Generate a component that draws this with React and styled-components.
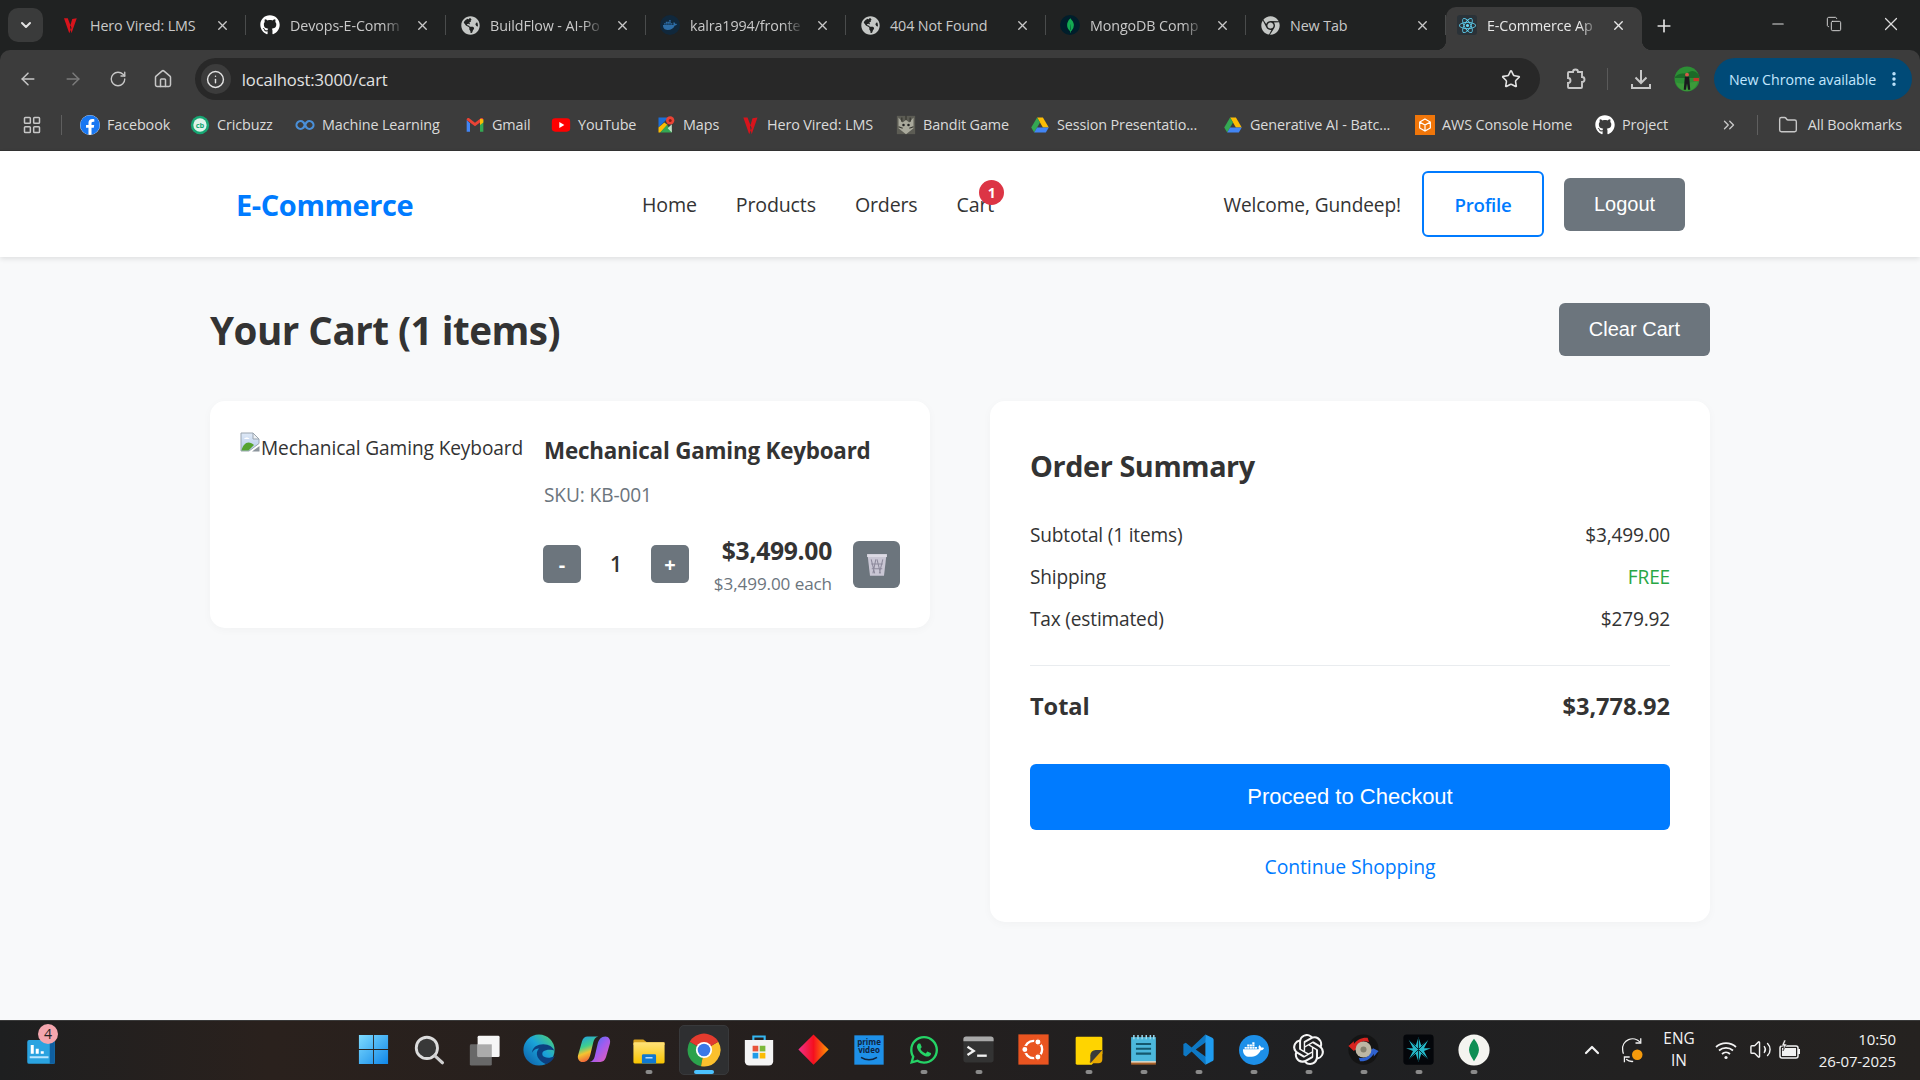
import React from 'react';
import styled, { createGlobalStyle } from 'styled-components';
import { ArrowLeft, ArrowRight, RotateCw, House, Info, Star, MoreVertical, Minus, Copy, X, Plus, ChevronDown, ChevronUp, LayoutGrid, Folder, ChevronsRight, Volume2 } from 'lucide-react';
import { FaGithub, FaGlobeAmericas, FaChrome, FaWhatsapp, FaDocker, FaFacebook } from 'react-icons/fa';
import { SiMongodb, SiReact, SiOpenai } from 'react-icons/si';

const UI = '"Open Sans", "Noto Sans", sans-serif';
const BTN = '"Liberation Sans", Arial, sans-serif';

const Global = createGlobalStyle`
  html, body { margin: 0; padding: 0; background: #f8f9fa; }
  body { font-family: ${UI}; color: #333; }
  * { box-sizing: border-box; }
`;

const Screen = styled.div`
  width: 1920px; height: 1080px; display: flex; flex-direction: column; overflow: hidden;
`;

/* ---------- browser chrome ---------- */
const TabStrip = styled.div`
  height: 50px; background: #202222; display: flex; align-items: flex-end; position: relative;
`;
const TabList = styled.div`display: flex; align-items: stretch; height: 43px;`;
const TabMenu = styled.button`
  width: 35px; height: 34px; margin: 0 3px 8px 8px; align-self: flex-end; border: 0; border-radius: 10px;
  background: #3a3b3b; color: #e3e3e3; display: flex; align-items: center; justify-content: center; padding: 0;
`;
const Tab = styled.div`
  position: relative; width: ${p => p.$w || 200}px; display: flex; align-items: center; padding: 0 14px 7px ${p => p.$active ? 11 : 14}px;
  color: ${p => p.$active ? '#e8e8e8' : '#c9c9c9'}; font-size: 14.3px; letter-spacing: -0.1px;
  background: ${p => p.$active ? '#3c3c3c' : 'transparent'};
  border-radius: ${p => p.$active ? '10px 10px 0 0' : '0'};
  &::after {
    content: ''; display: ${p => p.$last ? 'none' : 'block'}; position: absolute; right: 0; top: 8px; height: 20px; width: 1px; background: #4a4c4c;
  }
  ${p => p.$active ? `
    &::before { content: ''; position: absolute; left: -10px; bottom: 0; width: 10px; height: 10px;
      background: radial-gradient(circle at 0 0, transparent 10px, #3c3c3c 10.5px); }
  ` : ''}
`;
const ActiveFlare = styled.span`
  position: absolute; right: -10px; bottom: 0; width: 10px; height: 10px;
  background: radial-gradient(circle at 100% 0, transparent 10px, #3c3c3c 10.5px);
`;
const Favicon = styled.span`
  width: 20px; height: 20px; flex: none; display: flex; align-items: center; justify-content: center;
  color: ${p => p.$color || '#c4c7c5'}; background: ${p => p.$bg || 'transparent'}; border-radius: ${p => p.$round || '0'};
`;
const TabTitle = styled.span`
  flex: 1; margin-left: 10px; margin-right: ${p => p.$fade ? 6 : 0}px; white-space: nowrap;
  ${p => p.$fade ? `mask-image: linear-gradient(90deg, #000 82%, transparent 100%);` : ''}
`;
const TabClose = styled.span`
  width: 20px; flex: none; margin-left: 2px; display: flex; justify-content: center; color: inherit;
`;
const NewTab = styled.span`
  width: 26px; height: 26px; margin: 0 0 11px 9px; align-self: flex-end; color: #e3e3e3; display: flex; align-items: center; justify-content: center;
`;
const WindowControls = styled.div`
  margin-left: auto; display: flex; align-items: center; height: 50px; color: #dcdcdc;
`;
const WinBtn = styled.span`width: ${p => p.$w}px; display: flex; justify-content: center; padding-bottom: 2px;`;

const ToolBack = styled.div`background: #202222;`;
const Toolbar = styled.div`
  height: 50px; background: #3c3c3c; display: flex; padding: 8px 8px 0 5px; color: #c7c7c7;
  border-radius: 10px 10px 0 0;
`;
const NavIcon = styled.span`
  width: 45px; height: 42px; display: flex; align-items: center; justify-content: center; padding-left: 1px;
  color: ${p => p.$dim ? '#7b7b7b' : '#c7c7c7'};
`;
const Omnibox = styled.div`
  width: 1347px; height: 42px; margin-left: 10px; background: #282828; border-radius: 21px; display: flex; align-items: center; padding: 0 19px 0 6px; color: #e3e3e3;
`;
const InfoChip = styled.span`
  width: 30px; height: 30px; border-radius: 50%; background: #3c3c3c; display: flex; align-items: center; justify-content: center; color: #e3e3e3;
`;
const Url = styled.span`margin-left: 11px; font-size: 16.6px; letter-spacing: -0.1px; flex: 1;`;
const Tools = styled.div`display: flex; align-items: center; height: 42px;`;
const ToolSlot = styled.span`display: flex; align-items: center; justify-content: center; width: ${p => p.$w}px; flex: none; padding-left: ${p => p.$pl || 0}px;`;
const ToolDivider = styled.span`width: 1px; height: 22px; background: #5a5a5a; flex: none;`;
const UpdatePill = styled.span`
  width: 198px; height: 42px; margin-left: 14px; border-radius: 21px; background: #004a77; color: #c2e7ff; display: flex; align-items: center;
  padding-left: 15px; font-size: 14.2px; white-space: nowrap; justify-content: space-between; padding-right: 9px; letter-spacing: -0.05px;
`;

const BookmarkBar = styled.div`
  height: 50px; background: #3c3c3c; display: flex; align-items: center; color: #dadada; font-size: 14.4px; letter-spacing: -0.12px; padding-bottom: 1px;
`;
const AppsIcon = styled.span`
  width: 61px; padding-left: 22px; display: flex; color: #c7c7c7; flex: none;
`;
const BarDivider = styled.span`width: 1px; height: 20px; background: #5f5f5f; flex: none;`;
const Bookmark = styled.span`
  flex: 0 0 ${p => p.$w}px; display: flex; align-items: center; gap: 7px; white-space: nowrap;
`;
const BookmarkGroup = styled.div`display: flex; align-items: center; margin-left: 18px;`;
const BookmarkEnd = styled.div`margin-left: auto; display: flex; align-items: center; padding-right: 18px; color: #c7c7c7;`;
const Spacer = styled.span`width: ${p => p.$w}px; flex: none;`;
const AllLabel = styled.span`color: #dadada;`;

/* ---------- shop ---------- */
const Shop = styled.main`flex: 1; background: #f8f9fa; min-height: 0; border-top: 1px solid #333;`;
const Nav = styled.nav`
  height: 106px; background: #fff; box-shadow: 0 2px 5px rgba(0,0,0,.1); display: flex; align-items: center; padding: 0 235px 0 236px;
`;
const Logo = styled.div`color: #007bff; font-size: 29px; font-weight: 700; letter-spacing: -0.4px; width: 406px; white-space: nowrap;`;
const NavLinks = styled.div`display: flex; gap: 39px;`;
const NavLink = styled.a`
  position: relative; font-size: 19.6px; font-weight: 500; color: #333; letter-spacing: -0.15px; white-space: nowrap;
`;
const Badge = styled.span`
  position: absolute; right: -10px; top: -11px; width: 25px; height: 25px; border-radius: 50%; background: #dc3545; color: #fff;
  font-size: 14px; font-weight: 700; display: flex; align-items: center; justify-content: center; letter-spacing: 0;
`;
const NavUser = styled.div`margin-left: auto; display: flex; align-items: center;`;
const Welcome = styled.span`font-size: 19.1px; color: #333; margin-right: 21px; padding-top: 1px; white-space: nowrap; letter-spacing: -0.1px;`;
const ProfileBtn = styled.a`
  width: 122px; height: 66px; border: 2px solid #007bff; border-radius: 6px; color: #007bff; font-size: 18.7px; font-weight: 600;
  display: flex; align-items: center; justify-content: center; letter-spacing: -0.3px;
`;
const GreyBtn = styled.button`
  background: #6c757d; color: #fff; border: 0; border-radius: 6px; font: 20px ${BTN}; height: 53px; padding: 0 30px;
`;
const LogoutBtn = styled(GreyBtn)`margin-left: 20px; padding: 0 30px; width: 121px;`;
const Content = styled.div`padding: 46px 210px 0;`;
const Head = styled.div`display: flex; justify-content: space-between; align-items: center; height: 53px;`;
const Title = styled.h1`margin: 0; font-size: 38.6px; font-weight: 700; letter-spacing: -0.5px; color: #333; white-space: nowrap;`;
const Columns = styled.div`display: grid; grid-template-columns: 720px 720px; gap: 60px; margin-top: 45px; align-items: start;`;
const Card = styled.section`
  background: #fff; border-radius: 15px; box-shadow: 0 2px 10px rgba(0,0,0,.03);
`;
const ItemCard = styled(Card)`display: flex; padding: 30px; height: 227px;`;
const ItemPic = styled.div`
  width: 304px; flex: none; display: flex; align-items: flex-start; font-size: 19.1px; letter-spacing: -0.1px; color: #333; white-space: nowrap;
`;
const BrokenIcon = styled.svg`width: 20px; height: 20px; flex: none; margin-top: 1px;`;
const AltText = styled.span`margin: 5px 0 0 1px; line-height: 24px;`;
const ItemBody = styled.div`flex: 1; min-width: 0;`;
const ItemName = styled.h3`margin: 8px 0 0; font-size: 22.4px; font-weight: 700; line-height: 24px; letter-spacing: -0.2px; color: #333; white-space: nowrap;`;
const Sku = styled.div`margin-top: 20px; font-size: 19.1px; line-height: 24px; color: #6c757d; letter-spacing: -0.1px;`;
const ItemRow = styled.div`display: flex; align-items: center; margin-top: 32px; height: 50px; margin-left: -1px;`;
const QtyBtn = styled.button`
  width: 38px; height: 38px; background: #6c757d; color: #fff; border: 0; border-radius: 5px; font: 700 20px ${UI}; padding: 0; display: flex; align-items: center; justify-content: center;
`;
const Qty = styled.span`width: 70px; text-align: center; font-size: 21px; font-weight: 600; color: #333;`;
const PriceCol = styled.div`margin-left: auto; text-align: right; margin-right: 21px; padding-top: 6px;`;
const Price = styled.div`font-size: 24.7px; font-weight: 700; line-height: 32px; letter-spacing: -0.3px; color: #333;`;
const Each = styled.div`font-size: 17.1px; line-height: 33px; color: #6c757d; letter-spacing: -0.1px; white-space: nowrap;`;
const TrashBtn = styled.button`
  width: 47px; height: 47px; background: #6c757d; border: 0; border-radius: 6px; padding: 0; display: flex; align-items: center; justify-content: center;
`;
const SummaryCard = styled(Card)`padding: 40px; height: 521px;`;
const SummaryTitle = styled.h2`margin: 0 0 23px; font-size: 28.8px; font-weight: 700; line-height: 50px; letter-spacing: -0.4px; color: #333;`;
const Row = styled.div`
  display: flex; justify-content: space-between; align-items: center; height: 42px; font-size: 19.1px; color: #333; letter-spacing: -0.18px;
`;
const Free = styled.span`color: #28a745;`;
const Divider = styled.hr`border: 0; border-top: 1px solid #e9ecef; margin: 25px 0 0;`;
const TotalRow = styled(Row)`font-size: 23.6px; font-weight: 700; margin-top: 19px; height: 42px; letter-spacing: -0.05px;`;
const Checkout = styled.button`
  display: block; width: 100%; height: 66px; margin-top: 37px; border: 0; border-radius: 6px; background: #007bff; color: #fff; font: 22px ${BTN};
`;
const Continue = styled.a`
  display: block; text-align: center; color: #007bff; font-size: 19.4px; margin-top: 20px; line-height: 34px; letter-spacing: -0.1px;
`;

/* ---------- taskbar ---------- */
const Taskbar = styled.footer`
  height: 60px; flex: none; border-top: 1px solid #3a3a3a; display: flex; align-items: center; color: #fff; padding-bottom: 2px;
  background: linear-gradient(90deg, #1e1f20 0%, #2a211d 14%, #241f1e 45%, #1f2022 70%, #252220 100%);
`;
const WidgetArea = styled.div`width: 346px; flex: none; padding-left: 26px; display: flex;`;
const WidgetIcon = styled.span`position: relative; width: 30px; height: 30px; display: block;`;
const WidgetBadge = styled.span`
  position: absolute; left: 12px; top: -11px; width: 20px; height: 20px; border-radius: 50%; background: #f4a6ae; color: #222;
  font-size: 14px; display: flex; align-items: center; justify-content: center;
`;
const Dock = styled.div`display: flex; width: 1155px; flex: none;`;
const DockSlot = styled.span`
  position: relative; width: 55px; height: 50px; flex: none; display: flex; align-items: center; justify-content: center;
  &::before {
    content: ''; display: ${p => p.$on ? 'block' : 'none'}; position: absolute; inset: 0 2.5px; border-radius: 5px; background: #2e2f31; border: 1px solid #38393b;
  }
  > svg { position: relative; }
  &::after {
    content: ''; display: ${p => p.$on || p.$dot ? 'block' : 'none'}; position: absolute; bottom: 1px; left: 50%;
    transform: translateX(-50%); width: ${p => p.$on ? 20 : 7}px; height: 4px; border-radius: 3px; background: ${p => p.$on ? '#4cc2ff' : '#8a8a8a'};
  }
`;
const Tray = styled.div`flex: 1; display: flex; align-items: center; justify-content: flex-end; padding-right: 24px;`;
const TrayIcon = styled.span`display: flex; align-items: center; justify-content: center; width: ${p => p.$w}px; flex: none; color: #f2f2f2;`;
const Lang = styled.div`width: 54px; text-align: center; font-size: 15.4px; line-height: 22px; color: #f2f2f2; flex: none;`;
const Clock = styled.div`width: 92px; text-align: right; font-size: 15px; line-height: 22px; color: #f2f2f2; flex: none; letter-spacing: -0.1px; white-space: nowrap;`;
const DockerDisc = styled.span`
  width: 30px; height: 30px; border-radius: 50%; background: #1d8fe8; display: flex; align-items: center; justify-content: center; color: #fff;
`;

/* ---------- drawn icons ---------- */
const S = ({ size = 20, vb = '0 0 24 24', children }) => <svg width={size} height={size} viewBox={vb}>{children}</svg>;
const HeroV = ({ size = 18 }) => <S size={size}><path d="M4 3l7 20 3-7L9 3zM12 14l3-10 6-1-7 20z" fill="#d8141c" /></S>;
const ChromeLogo = ({ size = 30 }) => (
  <S size={size}>
    <path d="M12 12L2.5 6.5A11 11 0 0 0 10 22.800z" fill="#2ba24c" />
    <path d="M12 12l-2 10.800A11 11 0 0 0 21.500 6.500z" fill="#fbc02d" />
    <path d="M2.5 6.5A11 11 0 0 1 21.5 6.5L12 12z" fill="#e33b2e" />
    <circle cx="12" cy="12" r="5.4" fill="#fff" /><circle cx="12" cy="12" r="4.2" fill="#3b78e7" />
  </S>
);
const Gmail = () => (
  <S size={20}>
    <path d="M2 6v14h4V10z" fill="#4285f4" /><path d="M22 6v14h-4V10z" fill="#34a853" />
    <path d="M2 6l10 7.5L22 6v-.5c0-1.6-2-2.4-3-1.5l-7 5.2L5 4C4 3.1 2 3.9 2 5.5z" fill="#ea4335" />
    <path d="M18 4.4L22 5.5V9l-4 3z" fill="#fbbc04" />
  </S>
);
const YouTube = () => <S size={20}><rect x="1" y="4" width="22" height="16" rx="4" fill="#f00" /><path d="M10 8.5l6 3.5-6 3.5z" fill="#fff" /></S>;
const Maps = () => (
  <S size={20}>
    <path d="M3 3h12L3 15z" fill="#1a73e8" opacity=".9" /><path d="M3 15v6h2L14 12l-4-3z" fill="#fbbc04" />
    <path d="M5 21h14v-3L13 12z" fill="#34a853" /><path d="M19 21l-5-5 5-5z" fill="#c4e0c8" />
    <circle cx="17" cy="6.5" r="5" fill="#ea4335" /><circle cx="17" cy="6.5" r="1.8" fill="#8a1c14" />
  </S>
);
const Drive = () => (
  <S size={20}>
    <path d="M8.5 3h7l7 12h-7z" fill="#fbbc04" /><path d="M8.5 3L1.5 15l3.5 6 7-12z" fill="#34a853" />
    <path d="M5 21h14l3.5-6H8.5z" fill="#4285f4" />
  </S>
);
const Aws = () => (
  <Favicon $bg="#f0760a" $color="#fff"><S size={16}><path d="M12 3l8 4.5v9L12 21l-8-4.5v-9zM4 7.5l8 4.5 8-4.5M12 12v9" fill="none" stroke="#fff" strokeWidth="1.8" /></S></Favicon>
);
const Cricbuzz = () => (
  <S size={20}><circle cx="12" cy="12" r="11" fill="#17a673" /><circle cx="12" cy="12" r="8" fill="#dff3ea" /><text x="12" y="15" textAnchor="middle" fontSize="9" fontWeight="700" fill="#17a673" fontFamily={UI}>cb</text></S>
);
const Coursera = () => <S size={20}><path d="M10 8.6A4.8 4.8 0 1 0 10 15.4M14 8.6A4.8 4.8 0 1 1 14 15.4M10 8.6l4 6.8M10 15.4l4-6.8" fill="none" stroke="#4a90d9" strokeWidth="2.6" /></S>;
const Bandit = () => (
  <S size={20}><rect x="1" y="1" width="22" height="22" fill="#5c5c54" /><path d="M3 3l5 6 4-3 4 3 5-6v13l-9 7-9-7z" fill="#a9a99c" /><path d="M7 3v5M12 1v5M17 3v5M3 14l5 2M21 14l-5 2" stroke="#35352f" strokeWidth="1.4" /><circle cx="9" cy="12" r="1.5" fill="#222" /><circle cx="15" cy="12" r="1.5" fill="#222" /></S>
);
const PuzzleIcon = () => <S size={24}><path d="M5 5h4a2.5 2.5 0 0 1 5 0h4v5a2.5 2.5 0 0 1 0 5v5a1 1 0 0 1-1 1H5a1 1 0 0 1-1-1v-4a2.5 2.5 0 0 0 0-5V6a1 1 0 0 1 1-1z" fill="none" stroke="#c7c7c7" strokeWidth="1.9" /></S>;
const DownloadIcon = () => <S size={24}><path d="M12 3v13M6.500 10.500L12 16l5.500-5.500M3 17v4h18v-4" fill="none" stroke="#c7c7c7" strokeWidth="2" /></S>;
const AvatarPic = () => (
  <S size={26}>
    <circle cx="12" cy="12" r="11.500" fill="#2c8f35" />
    <path d="M1 10c5-5 9-2 12-4s6-2 10 2v3H1z" fill="#1c6a28" />
    <path d="M2 15c4 2 8 1 20-1-1 5-5 9-10 9S3 20 2 15z" fill="#3c9a3a" />
    <path d="M18 11h5v3h-5z" fill="#c4382a" />
    <circle cx="12" cy="8" r="1.800" fill="#d65a4a" />
    <path d="M10 10h4l1 12h-2l-1-6-1 6H9z" fill="#1a1a1e" />
  </S>
);
const Windows = () => (
  <S size={35}><defs><linearGradient id="win" x1="0" y1="0" x2="1" y2="1"><stop offset="0" stopColor="#7fdcff" /><stop offset="1" stopColor="#0f86e8" /></linearGradient></defs>
    <path d="M2 2h9.700v9.700H2zM12.300 2H22v9.700h-9.700zM2 12.300h9.700V22H2zM12.300 12.300H22V22h-9.700z" fill="url(#win)" /></S>
);
const SearchGlyph = () => <S size={34}><circle cx="10.500" cy="10.500" r="7.500" fill="#383838" stroke="#dcdcdc" strokeWidth="2" /><path d="M16 16l5.500 5" stroke="#cfcfcf" strokeWidth="2.200" strokeLinecap="round" /></S>;
const TaskView = () => <S size={34}><rect x="2" y="8" width="15.500" height="15" rx="1" fill="#686868" /><rect x="7.500" y="2" width="15.500" height="15" rx="1" fill="#f6f6f6" /><rect x="7.500" y="8" width="10" height="9" fill="#ababab" /></S>;
const Edge = () => (
  <S size={34}><defs><linearGradient id="edg" x1="0" y1="1" x2="1" y2="0"><stop offset="0" stopColor="#0c59a4" /><stop offset=".55" stopColor="#1aa3d9" /><stop offset="1" stopColor="#54d66a" /></linearGradient></defs>
    <circle cx="12" cy="12" r="11" fill="url(#edg)" /><path d="M23 13.500c-.6-3.500-4-5.500-8-5.500-4 0-7.500 2-8 6 1-2 3-3 5-3-1.500 1.500-2 3.500-1 6 1 2 3 4 6 5 3-1 5.500-3.500 6-6-2 1.500-5 2-7 1s-2-3-1-4c2-1.500 6-1.500 8-.5z" fill="#0c3f7f" /></S>
);
const Copilot = () => (
  <S size={34}><defs>
      <linearGradient id="copa" x1="0" y1="0" x2="0.3" y2="1"><stop offset="0" stopColor="#1f9be8" /><stop offset=".45" stopColor="#3fcf8e" /><stop offset=".7" stopColor="#f4c430" /><stop offset="1" stopColor="#f0663a" /></linearGradient>
      <linearGradient id="copb" x1="1" y1="1" x2="0" y2="0"><stop offset="0" stopColor="#2a7bf0" /><stop offset=".5" stopColor="#a05cf0" /><stop offset="1" stopColor="#f05cb0" /></linearGradient></defs>
    <path d="M7.500 2.500H15c-2 .6-3 2-3.500 4L9.500 15c-.8 3.500-2.500 5.500-5.500 5.500C1.500 20.500 0 18 .8 15.500L3.500 6C4.200 3.800 5.500 2.500 7.500 2.500z" fill="url(#copa)" />
    <path d="M7.500 2.500H15c-2 .6-3 2-3.500 4L9.500 15c-.8 3.500-2.500 5.500-5.500 5.500C1.500 20.500 0 18 .8 15.500L3.500 6C4.200 3.800 5.500 2.500 7.500 2.500z" fill="url(#copb)" transform="rotate(180 12 11.500)" />
  </S>
);
const Files = () => (
  <S size={34}><defs><linearGradient id="fol" x1="0" y1="0" x2="0" y2="1"><stop offset="0" stopColor="#ffe27a" /><stop offset="1" stopColor="#f8c400" /></linearGradient></defs>
    <path d="M1 5.500a1 1 0 0 1 1-1h6l2.500 2H23v2H1z" fill="#d6a01e" /><rect x="1" y="6.500" width="22" height="15" rx="1" fill="url(#fol)" /><path d="M7 16a1 1 0 0 1 1-1h8a1 1 0 0 1 1 1v5.500H7z" fill="#0f78d0" /><rect x="9.500" y="17" width="5" height="1" fill="#bfe3ff" /></S>
);
const Store = () => (
  <S size={34}><path d="M8 5V2.500h8V5" fill="none" stroke="#34b6f0" strokeWidth="1.500" /><path d="M2 5h20v15a3 3 0 0 1-3 3H5a3 3 0 0 1-3-3z" fill="#f4f4f4" />
    <rect x="7.500" y="9" width="4" height="4" fill="#e8543a" /><rect x="12.500" y="9" width="4" height="4" fill="#7cb83a" /><rect x="7.500" y="14" width="4" height="4" fill="#1f9be8" /><rect x="12.500" y="14" width="4" height="4" fill="#fbbc04" /></S>
);
const Diamond = () => <S size={33}><defs><linearGradient id="dia" x1="0" y1="0" x2="1" y2="0"><stop offset="0" stopColor="#f0308a" /><stop offset=".5" stopColor="#f5101f" /><stop offset="1" stopColor="#ff9a00" /></linearGradient></defs><path d="M12 1l11 11-11 11L1 12z" fill="url(#dia)" /></S>;
const Prime = () => (
  <S size={32}><rect x="1" y="1" width="22" height="22" fill="#1e90e8" /><text x="12" y="8.500" textAnchor="middle" fontSize="6" fontWeight="700" fill="#10253f" fontFamily={UI}>prime</text><text x="12" y="14.500" textAnchor="middle" fontSize="6" fontWeight="700" fill="#10253f" fontFamily={UI}>video</text><path d="M6 17.500c4 2.400 8 2.400 12 0" stroke="#10253f" strokeWidth="1.200" fill="none" /></S>
);
const Terminal = () => <S size={33}><rect x="1" y="2.500" width="22" height="19" rx="2" fill="#333333" /><path d="M1 4.500a2 2 0 0 1 2-2h18a2 2 0 0 1 2 2V6H1z" fill="#a8a8a8" /><path d="M4 10l4.500 3-4.500 3" stroke="#f2f2f2" strokeWidth="1.700" fill="none" /><path d="M11 16.500h7" stroke="#f2f2f2" strokeWidth="1.700" /></S>;
const Ubuntu = () => (
  <S size={33}><rect x="1" y="1" width="22" height="22" fill="#e95420" />
    <circle cx="12" cy="12" r="6.300" fill="none" stroke="#fff" strokeWidth="1.700" />
    <circle cx="5.700" cy="12" r="2.300" fill="#fff" stroke="#e95420" strokeWidth="1" /><circle cx="15.200" cy="6.550" r="2.300" fill="#fff" stroke="#e95420" strokeWidth="1" /><circle cx="15.200" cy="17.450" r="2.300" fill="#fff" stroke="#e95420" strokeWidth="1" /></S>
);
const Sticky = () => <S size={32}><path d="M3 2h18a1 1 0 0 1 1 1v12l-8 8H3a1 1 0 0 1-1-1V3a1 1 0 0 1 1-1z" fill="#ffd400" /><path d="M22 12v7a3 3 0 0 1-3 3h-6l-1-1 5-8a2 2 0 0 1 1-1z" fill="#e8a800" /><path d="M13 22v-6a4 4 0 0 1 4-4h5z" fill="#3a3a3a" /></S>;
const Notepad = () => <S size={33}><rect x="3" y="3" width="18" height="18" fill="#4cb8dc" /><path d="M3 21h18v2H3z" fill="#a8622a" /><path d="M3 20.500h18v1H3z" fill="#e8e0d0" /><path d="M5 1.500v3M8 1.500v3M11 1.500v3M14 1.500v3M17 1.500v3M19.500 1.500v3" stroke="#9ad8ec" strokeWidth="1.100" /><path d="M6.500 8h11M6.500 11.500h11M6.500 15h11" stroke="#14586e" strokeWidth="1.500" /></S>;
const VsCode = () => (
  <S size={33}>
    <path d="M17 1l-10 9.500L2.800 7 1 8v8l1.800 1L7 13.500 17 23l.5-5.500L10 12l7.500-5.500z" fill="#0e78c4" />
    <path d="M17 1l5 2.400c.6.300 1 .9 1 1.600v14c0 .7-.4 1.300-1 1.600L17 23z" fill="#1f9cf0" />
  </S>
);
const Recorder = () => (
  <S size={33}><circle cx="12" cy="12" r="11" fill="#141414" /><path d="M1 9.500l4-3.500v2C7 5 11 3 15 3.500l1 3C12 5 9 6.500 7.500 9.500h1.500L5 13z" fill="#d8231f" /><path d="M23 13l-3.500 4v-2c-2 3.500-6 6-10 5.500l-1-2.500c4 1 7-1 8.500-3.500H15l4-3.500z" fill="#2f62d0" /><circle cx="12" cy="12" r="5.800" fill="#bdb7a4" /><circle cx="12" cy="12" r="2.200" fill="#85816f" /></S>
);
const StarApp = () => <S size={33}><rect x="1" y="1" width="22" height="22" rx="2.500" fill="#04060a" /><path d="M12 3l2 6 5-4-3 6h5l-5 2 3 6-5-4-2 6-2-6-5 4 3-6-5-2h5L5 5l5 4z" fill="#25b8c8" /><path d="M12 3v18M5 5l14 14M19 5L5 19" stroke="#062c34" strokeWidth=".7" /></S>;
const MongoRound = () => <S size={34}><circle cx="12" cy="12" r="11" fill="#f4f4f0" /><path d="M12 4c2.400 2.800 3.500 5.500 3.500 8s-2 5.500-3.500 8c-1.500-2.500-3.500-5.500-3.500-8S9.600 6.800 12 4z" fill="#0e8f54" /></S>;
const Widgets = () => <S size={30}><rect x="1" y="4" width="22" height="19" rx="1.500" fill="#2aa3e0" /><rect x="19" y="4" width="4" height="19" fill="#0f5fa0" /><path d="M5 8v7M9 11v4M13 13v2" stroke="#fff" strokeWidth="2.400" /><rect x="3" y="17" width="15" height="1.600" fill="#b8e6ff" /></S>;
const Wifi = () => <S size={24}><path d="M2 9a15 15 0 0 1 20 0M5 12.500a10.500 10.500 0 0 1 14 0M8 16a6 6 0 0 1 8 0" fill="none" stroke="#f2f2f2" strokeWidth="1.700" /><circle cx="12" cy="19.500" r="1.600" fill="#f2f2f2" /></S>;
const Battery = () => (
  <S size={24}><rect x="3" y="8" width="18" height="12" rx="2" fill="none" stroke="#f2f2f2" strokeWidth="1.500" /><rect x="5" y="10" width="14" height="8" fill="#f2f2f2" /><rect x="21" y="11" width="2" height="5" fill="#f2f2f2" /><path d="M7 2l-2.500 6H7l-1 5 4-7H7.500L9 2z" fill="#f2f2f2" stroke="#241f1e" strokeWidth=".6" /></S>
);
const SyncIcon = () => (
  <S size={28}>
    <path d="M19 5.500A8.500 8.500 0 0 0 4 12c0 1.200.3 2.300.7 3.300" fill="none" stroke="#f2f2f2" strokeWidth="1.100" />
    <path d="M15 6h4.500V2" fill="none" stroke="#f2f2f2" strokeWidth="1.100" />
    <path d="M7 20a8 8 0 0 0 6 1.800" fill="none" stroke="#f2f2f2" strokeWidth="1.100" />
    <path d="M10 18H5.500v4.500" fill="none" stroke="#f2f2f2" strokeWidth="1.100" />
    <circle cx="16.500" cy="16" r="4.500" fill="#f59a0c" />
  </S>
);
const Broken = () => (
  <BrokenIcon viewBox="0 0 20 20">
    <defs><linearGradient id="sky" x1="0" y1="0" x2="0" y2="1"><stop offset="0" stopColor="#dfe9f7" /><stop offset="1" stopColor="#b4cbea" /></linearGradient></defs>
    <path d="M1 1h12l6 6v4.500L9 19H1z" fill="url(#sky)" stroke="#9aa5b0" />
    <path d="M1.500 18.500c1-5 4-8 7-8 2 0 4 1 5.500 2.500L8.500 18.500z" fill="#55a32f" />
    <path d="M4 7c1-2 4.500-2 5.500 0z" fill="#fff" />
    <path d="M13 1v6h6z" fill="#eef1f4" stroke="#9aa5b0" />
    <path d="M19.500 14v5.500H12z" fill="#8b949c" />
  </BrokenIcon>
);
const Trash = () => (
  <S size={28}>
    <path d="M4 5h16l-2 17H6z" fill="#c9c6d4" />
    <rect x="3.500" y="3.500" width="17" height="2.500" fill="#dcdae4" />
    <path d="M7 8l3 12M11 8l-2.500 12M12 8l3 12M17 8l-3 12M7 12h10M7.500 16h9" stroke="#8d8a9c" strokeWidth=".9" fill="none" />
  </S>
);

const tabs = [
  { t: 'Hero Vired: LMS', i: <HeroV /> },
  { t: 'Devops-E-Comm', i: <Favicon $color="#fff"><FaGithub size={20} /></Favicon>, f: 1 },
  { t: 'BuildFlow - AI-Po', i: <Favicon><FaGlobeAmericas size={19} /></Favicon>, f: 1 },
  { t: 'kalra1994/fronte', i: <Favicon $color="#2d6ea8" $bg="#10283c" $round="50%"><FaDocker size={14} /></Favicon>, f: 1 },
  { t: '404 Not Found', i: <Favicon><FaGlobeAmericas size={19} /></Favicon> },
  { t: 'MongoDB Comp', i: <Favicon $color="#13aa52" $bg="#001e2b" $round="50%"><SiMongodb size={15} /></Favicon>, f: 1 },
  { t: 'New Tab', i: <Favicon><FaChrome size={19} /></Favicon> },
];

const marks = [
  { w: 110, i: <Favicon $color="#1877f2" $bg="#fff" $round="50%"><FaFacebook size={20} /></Favicon>, t: 'Facebook' },
  { w: 105, i: <Cricbuzz />, t: 'Cricbuzz' },
  { w: 170, i: <Coursera />, t: 'Machine Learning' },
  { w: 86, i: <Gmail />, t: 'Gmail' },
  { w: 105, i: <YouTube />, t: 'YouTube' },
  { w: 84, i: <Maps />, t: 'Maps' },
  { w: 156, i: <HeroV size={20} />, t: 'Hero Vired: LMS' },
  { w: 134, i: <Bandit />, t: 'Bandit Game' },
  { w: 193, i: <Drive />, t: 'Session Presentatio...' },
  { w: 192, i: <Drive />, t: 'Generative AI - Batc...' },
  { w: 180, i: <Aws />, t: 'AWS Console Home' },
  { w: 80, i: <Favicon $color="#fff"><FaGithub size={20} /></Favicon>, t: 'Project' },
];

const dock = [
  [<Windows />], [<SearchGlyph />], [<TaskView />], [<Edge />], [<Copilot />], [<Files />, 'dot'], [<ChromeLogo size={36} />, 'on'],
  [<Store />], [<Diamond />], [<Prime />], [<FaWhatsapp size={32} color="#25d366" />, 'dot'], [<Terminal />, 'dot'], [<Ubuntu />],
  [<Sticky />, 'dot'], [<Notepad />, 'dot'], [<VsCode />, 'dot'], [<DockerDisc><FaDocker size={21} /></DockerDisc>, 'dot'],
  [<SiOpenai size={31} color="#f4f4f4" />, 'dot'], [<Recorder />, 'dot'], [<StarApp />, 'dot'], [<MongoRound />, 'dot'],
];

export default function App() {
  return (
    <Screen>
      <Global />
      <TabStrip>
        <TabMenu><ChevronDown size={16} strokeWidth={3} /></TabMenu>
        <TabList>
          {tabs.map(tb => (
            <Tab key={tb.t}>
              <Favicon>{tb.i}</Favicon>
              <TabTitle $fade={tb.f}>{tb.t}</TabTitle>
              <TabClose><X size={15} strokeWidth={2.2} /></TabClose>
            </Tab>
          ))}
          <Tab $active $last $w={196}>
            <Favicon $color="#61dafb" $bg="#2a3238" $round="3px"><SiReact size={17} /></Favicon>
            <TabTitle $fade>E-Commerce Ap</TabTitle>
            <TabClose><X size={15} strokeWidth={2.2} /></TabClose>
            <ActiveFlare />
          </Tab>
        </TabList>
        <NewTab><Plus size={20} strokeWidth={2} /></NewTab>
        <WindowControls>
          <WinBtn $w={56}><Minus size={18} strokeWidth={1.4} /></WinBtn>
          <WinBtn $w={56}><Copy size={16} strokeWidth={1.4} /></WinBtn>
          <WinBtn $w={58}><X size={22} strokeWidth={1.3} /></WinBtn>
        </WindowControls>
      </TabStrip>
      <ToolBack>
        <Toolbar>
          <NavIcon><ArrowLeft size={20} strokeWidth={1.8} /></NavIcon>
          <NavIcon $dim><ArrowRight size={20} strokeWidth={1.8} /></NavIcon>
          <NavIcon><RotateCw size={18} strokeWidth={1.8} /></NavIcon>
          <NavIcon><House size={20} strokeWidth={1.8} /></NavIcon>
          <Omnibox>
            <InfoChip><Info size={19} strokeWidth={1.8} /></InfoChip>
            <Url>localhost:3000/cart</Url>
            <Star size={20} strokeWidth={1.9} />
          </Omnibox>
          <Tools>
            <ToolSlot $w={67} $pl={5}><PuzzleIcon /></ToolSlot>
            <ToolDivider />
            <ToolSlot $w={66}><DownloadIcon /></ToolSlot>
            <AvatarPic />
            <UpdatePill>New Chrome available<MoreVertical size={18} strokeWidth={2.6} /></UpdatePill>
          </Tools>
        </Toolbar>
      </ToolBack>
      <BookmarkBar>
        <AppsIcon><LayoutGrid size={20} strokeWidth={1.8} /></AppsIcon>
        <BarDivider />
        <BookmarkGroup>
          {marks.map(m => <Bookmark key={m.t} $w={m.w}>{m.i}{m.t}</Bookmark>)}
        </BookmarkGroup>
        <BookmarkEnd>
          <ChevronsRight size={18} strokeWidth={1.8} />
          <Spacer $w={19} />
          <BarDivider />
          <Spacer $w={20} />
          <Folder size={20} strokeWidth={1.7} />
          <Spacer $w={10} />
          <AllLabel>All Bookmarks</AllLabel>
        </BookmarkEnd>
      </BookmarkBar>
      <Shop>
        <Nav>
          <Logo>E-Commerce</Logo>
          <NavLinks>
            <NavLink>Home</NavLink>
            <NavLink>Products</NavLink>
            <NavLink>Orders</NavLink>
            <NavLink>Cart<Badge>1</Badge></NavLink>
          </NavLinks>
          <NavUser>
            <Welcome>Welcome, Gundeep!</Welcome>
            <ProfileBtn>Profile</ProfileBtn>
            <LogoutBtn>Logout</LogoutBtn>
          </NavUser>
        </Nav>
        <Content>
          <Head>
            <Title>Your Cart (1 items)</Title>
            <GreyBtn>Clear Cart</GreyBtn>
          </Head>
          <Columns>
            <ItemCard>
              <ItemPic><Broken /><AltText>Mechanical Gaming Keyboard</AltText></ItemPic>
              <ItemBody>
                <ItemName>Mechanical Gaming Keyboard</ItemName>
                <Sku>SKU: KB-001</Sku>
                <ItemRow>
                  <QtyBtn>-</QtyBtn>
                  <Qty>1</Qty>
                  <QtyBtn>+</QtyBtn>
                  <PriceCol>
                    <Price>$3,499.00</Price>
                    <Each>$3,499.00 each</Each>
                  </PriceCol>
                  <TrashBtn><Trash /></TrashBtn>
                </ItemRow>
              </ItemBody>
            </ItemCard>
            <SummaryCard>
              <SummaryTitle>Order Summary</SummaryTitle>
              <Row><span>Subtotal (1 items)</span><span>$3,499.00</span></Row>
              <Row><span>Shipping</span><Free>FREE</Free></Row>
              <Row><span>Tax (estimated)</span><span>$279.92</span></Row>
              <Divider />
              <TotalRow><span>Total</span><span>$3,778.92</span></TotalRow>
              <Checkout>Proceed to Checkout</Checkout>
              <Continue>Continue Shopping</Continue>
            </SummaryCard>
          </Columns>
        </Content>
      </Shop>
      <Taskbar>
        <WidgetArea>
          <WidgetIcon><Widgets /><WidgetBadge>4</WidgetBadge></WidgetIcon>
        </WidgetArea>
        <Dock>
          {dock.map(([ic, kind], i) => <DockSlot key={i} $on={kind === 'on'} $dot={kind === 'dot'}>{ic}</DockSlot>)}
        </Dock>
        <Tray>
          <TrayIcon $w={40}><ChevronUp size={24} strokeWidth={2.2} /></TrayIcon>
          <TrayIcon $w={40}><SyncIcon /></TrayIcon>
          <Lang>ENG<br />IN</Lang>
          <TrayIcon $w={40}><Wifi /></TrayIcon>
          <TrayIcon $w={28}><Volume2 size={23} strokeWidth={1.5} /></TrayIcon>
          <TrayIcon $w={30}><Battery /></TrayIcon>
          <Clock>10:50<br />26-07-2025</Clock>
        </Tray>
      </Taskbar>
    </Screen>
  );
}
